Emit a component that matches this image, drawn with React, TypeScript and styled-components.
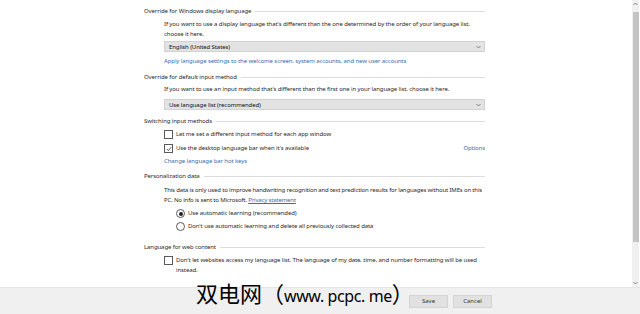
import React from "react";
import styled, { createGlobalStyle } from "styled-components";

const GlobalStyle = createGlobalStyle`
	html, body {
		margin: 0;
		padding: 0;
		background: #ffffff;
	}
	body {
		font-family: "Noto Sans", "Open Sans", sans-serif;
		color: #1a1a1a;
	}
`;

const Page = styled.div`
	position: relative;
	width: 640px;
	height: 314px;
	display: flex;
	flex-direction: column;
	overflow: hidden;
	font-size: 6px;
	letter-spacing: -0.1px;
	line-height: 10px;
`;

const Main = styled.div`
	flex: 1;
	display: flex;
	min-height: 0;
`;

const Content = styled.div`
	flex: 1;
	padding: 6px 0 0 144px;
`;

const Column = styled.div`
	width: 341px;
	display: flex;
	flex-direction: column;
`;

const Header = styled.div<{ $top?: number }>`
	display: flex;
	align-items: center;
	gap: 4px;
	height: 10px;
	margin-top: ${(p) => p.$top ?? 0}px;
	color: #2a2a2a;

	&::after {
		content: "";
		flex: 1;
		height: 1px;
		background: #dcdcdc;
	}
`;

const Indent = styled.div<{ $top?: number; $left?: number }>`
	margin-top: ${(p) => p.$top ?? 0}px;
	padding-left: ${(p) => p.$left ?? 20}px;
`;

const Text = styled.p<{ $tight?: boolean }>`
	margin: 0;
	color: #2a2a2a;
	letter-spacing: ${(p) => (p.$tight ? "-0.16px" : "inherit")};
`;

const Link = styled.a`
	color: #3370b0;
	text-decoration: none;
`;

const Underlined = styled(Link)`
	text-decoration: underline;
`;

const Select = styled.div<{ $top?: number }>`
	display: flex;
	align-items: center;
	justify-content: space-between;
	height: 11px;
	margin-top: ${(p) => p.$top ?? 0}px;
	padding: 0 3px 0 4px;
	background: #e3e3e3;
	border: 1px solid #d2d2d2;
	box-sizing: border-box;
	color: #111;
`;

const Chevron = styled.svg`
	width: 5px;
	height: 4px;
`;

const OptionRow = styled.label`
	display: flex;
	align-items: flex-start;
	gap: 3px;
	color: #2a2a2a;
`;

const Box = styled.span<{ $round?: boolean }>`
	flex: none;
	width: 7px;
	height: 7px;
	margin-top: 1px;
	border: 1px solid #5a5a5a;
	border-radius: ${(p) => (p.$round ? "50%" : "0")};
	display: flex;
	align-items: center;
	justify-content: center;
	background: #fff;
`;

const Dot = styled.span`
	width: 4px;
	height: 4px;
	border-radius: 50%;
	background: #222;
`;

const Spread = styled.div`
	display: flex;
	justify-content: space-between;
`;

const Scrollbar = styled.div`
	width: 7px;
	margin-right: 1px;
	background: #f0f0f0;
	display: flex;
	flex-direction: column;
	align-items: center;
	justify-content: space-between;
	padding: 2px 0;
	box-sizing: border-box;
`;

const Thumb = styled.div`
	width: 6px;
	height: 230px;
	background: #c4c4c4;
	margin-top: 6px;
	margin-bottom: auto;
`;

const Footer = styled.div`
	height: 26px;
	flex: none;
	background: #f0f0f0;
	display: flex;
	align-items: center;
	justify-content: flex-end;
	gap: 5px;
	padding-right: 148px;
	border-top: 1px solid #e6e6e6;
`;

const Button = styled.button`
	width: 39px;
	height: 13px;
	padding: 0;
	border: 1px solid #d4d4d4;
	background: #e1e1e1;
	font-family: inherit;
	font-size: 6px;
	color: #333;
`;

const Watermark = styled.div`
	position: absolute;
	left: 196px;
	top: 277px;
	display: flex;
	align-items: baseline;
	color: #000;
	white-space: nowrap;
	line-height: 30px;
	letter-spacing: 0;
`;

const WatermarkHan = styled.span`
	font-family: "Noto Sans CJK SC", sans-serif;
	font-size: 22px;
`;

const WatermarkLatin = styled.span`
	font-family: "Noto Sans", sans-serif;
	font-size: 16px;
	letter-spacing: -0.4px;
`;

function Arrow({ up }: { up?: boolean }) {
	return (
		<Chevron viewBox="0 0 5 4">
			<path
				d={up ? "M0.5 3 L2.5 1 L4.5 3" : "M0.5 1 L2.5 3 L4.5 1"}
				fill="none"
				stroke="#777"
				strokeWidth="0.9"
			/>
		</Chevron>
	);
}

function Check({ checked }: { checked?: boolean }) {
	return (
		<Box>
			{checked && (
				<svg width="6" height="6" viewBox="0 0 6 6">
					<path d="M0.8 3 L2.4 4.6 L5.2 1.2" fill="none" stroke="#333" strokeWidth="0.8" />
				</svg>
			)}
		</Box>
	);
}

export default function App() {
	return (
		<>
			<GlobalStyle />
			<Page>
				<Main>
					<Content>
						<Column>
							<Header>Override for Windows display language</Header>
							<Indent $top={3}>
								<Text>
									If you want to use a display language that's different than the one determined by the order of your language list,
									choose it here.
								</Text>
								<Select $top={2}>
									English (United States)
									<Arrow />
								</Select>
							</Indent>
							<Indent $top={4}>
								<Link>Apply language settings to the welcome screen, system accounts, and new user accounts</Link>
							</Indent>

							<Header $top={6}>Override for default input method</Header>
							<Indent $top={2}>
								<Text>If you want to use an input method that's different than the first one in your language list, choose it here.</Text>
								<Select $top={5}>
									Use language list (recommended)
									<Arrow />
								</Select>
							</Indent>

							<Header $top={6}>Switching input methods</Header>
							<Indent $top={3}>
								<OptionRow>
									<Check />
									Let me set a different input method for each app window
								</OptionRow>
							</Indent>
							<Indent $top={4}>
								<Spread>
									<OptionRow>
										<Check checked />
										Use the desktop language bar when it's available
									</OptionRow>
									<Link>Options</Link>
								</Spread>
							</Indent>
							<Indent $top={3}>
								<Link>Change language bar hot keys</Link>
							</Indent>

							<Header $top={5}>Personalization data</Header>
							<Indent $top={4}>
								<Text $tight>
									This data is only used to improve handwriting recognition and text prediction results for languages without IMEs on this
									PC. No info is sent to Microsoft. <Underlined>Privacy statement</Underlined>
								</Text>
							</Indent>
							<Indent $top={3} $left={32}>
								<OptionRow>
									<Box $round>
										<Dot />
									</Box>
									Use automatic learning (recommended)
								</OptionRow>
							</Indent>
							<Indent $top={3} $left={32}>
								<OptionRow>
									<Box $round />
									Don't use automatic learning and delete all previously collected data
								</OptionRow>
							</Indent>

							<Header $top={11}>Language for web content</Header>
							<Indent $top={3}>
								<OptionRow>
									<Check />
									<span>
										Don't let websites access my language list. The language of my date, time, and number formatting will be used
										instead.
									</span>
								</OptionRow>
							</Indent>
						</Column>
					</Content>
					<Scrollbar>
						<Arrow up />
						<Thumb />
						<Arrow />
					</Scrollbar>
				</Main>
				<Footer>
					<Button>Save</Button>
					<Button>Cancel</Button>
				</Footer>
				<Watermark>
					<WatermarkHan>双电网（</WatermarkHan>
					<WatermarkLatin>www. pcpc. me</WatermarkLatin>
					<WatermarkHan>）</WatermarkHan>
				</Watermark>
			</Page>
		</>
	);
}
